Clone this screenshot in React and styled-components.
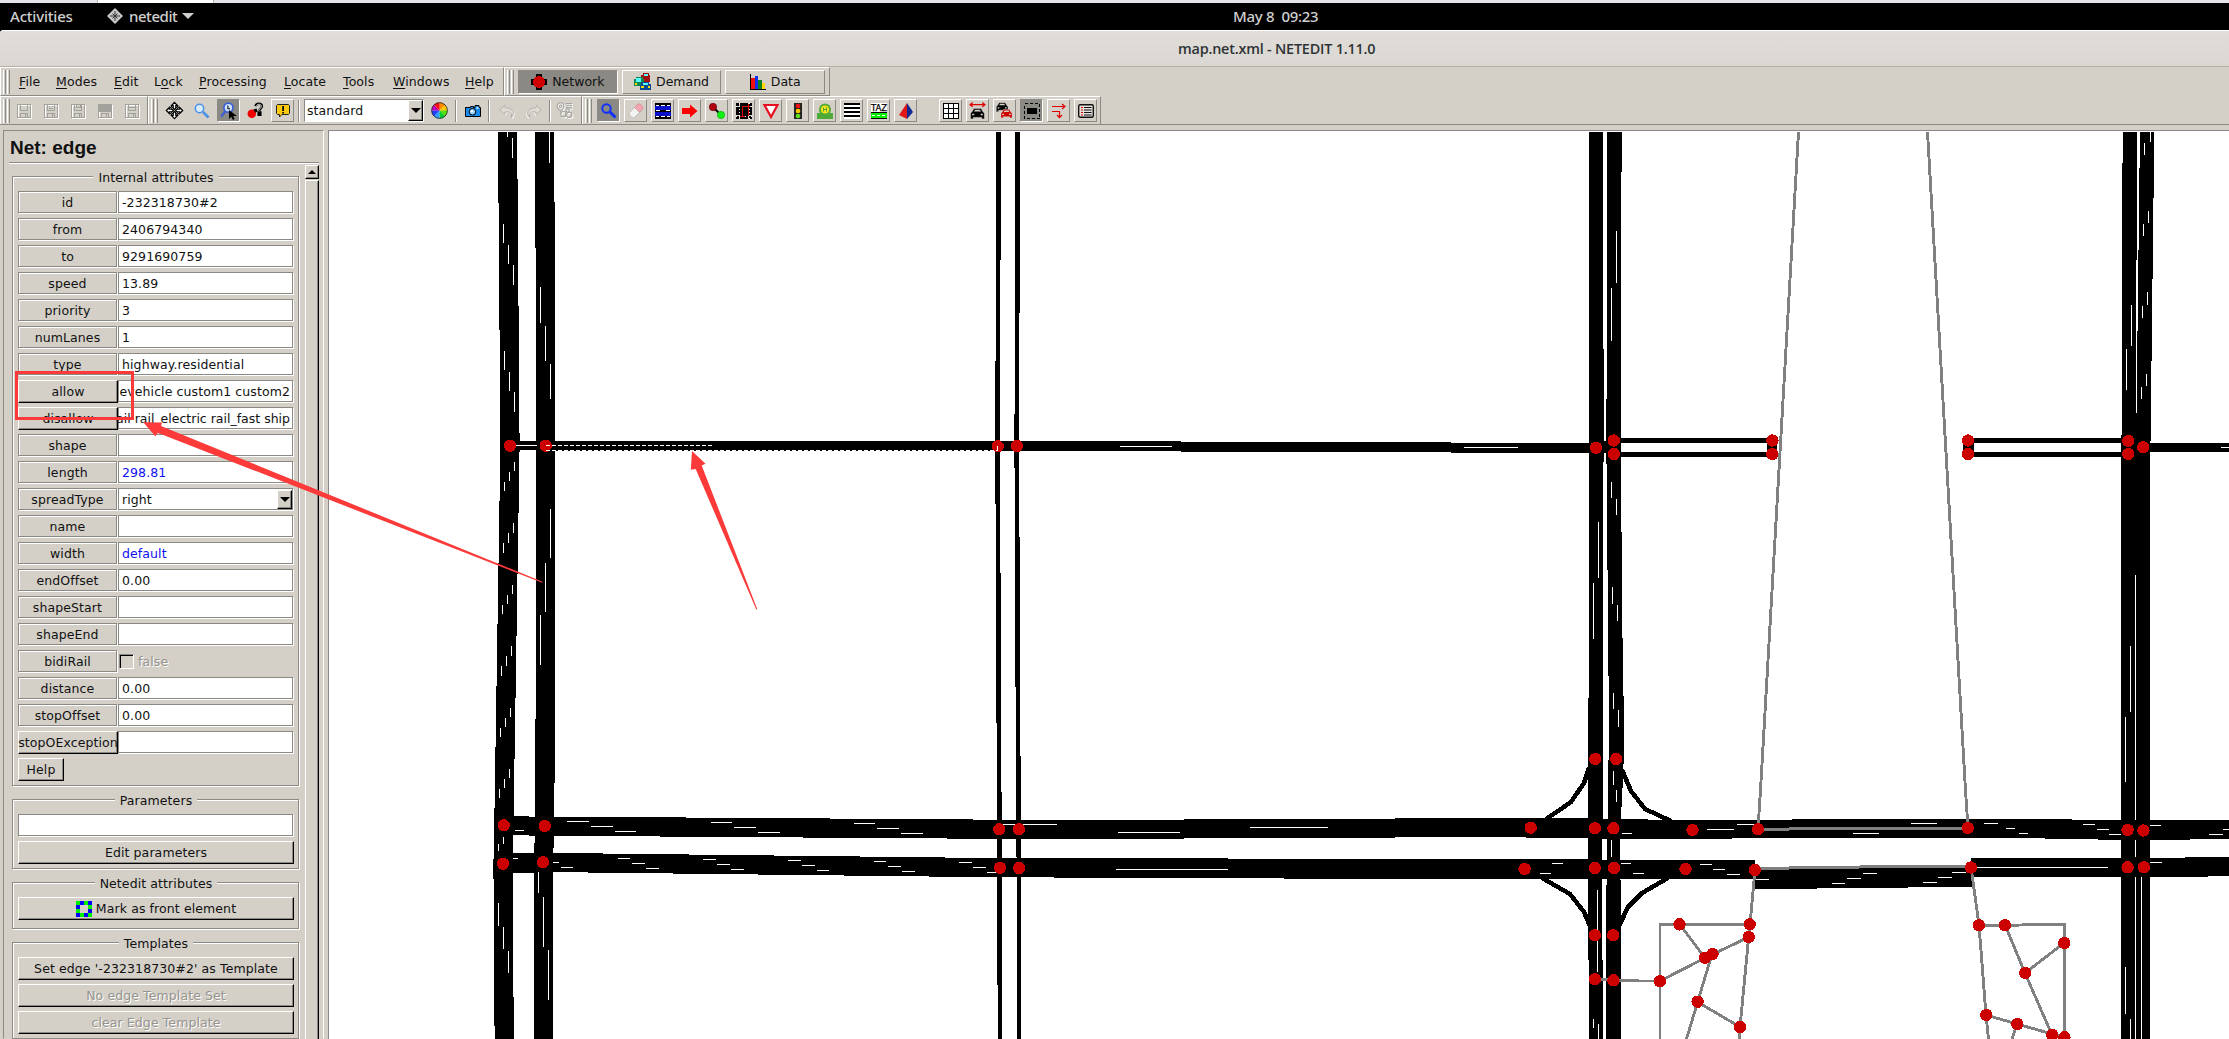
import React from 'react';
import styled, { createGlobalStyle, css } from 'styled-components';

const BASE = '#d4d0c8';
const SHADOW = '#8a8983';

const Global = createGlobalStyle`
  html, body { margin: 0; padding: 0; overflow: hidden; background: ${BASE}; }
  * { box-sizing: border-box; }
  svg { display: block; flex: none; }
`;

const groove = css`
  border: 1px solid ${SHADOW};
  box-shadow: 1px 1px 0 #fff, inset 1px 1px 0 #fff;
`;
const raised = css`
  border: 1px solid;
  border-color: #fff #000 #000 #fff;
  box-shadow: inset -1px -1px 0 ${SHADOW};
`;

const Screen = styled.div`
  position: relative;
  width: 2229px;
  height: 1039px;
  overflow: hidden;
  display: flex;
  flex-direction: column;
  background: ${BASE};
  color: #111;
  font: 12.5px/16px "DejaVu Sans", sans-serif;
  letter-spacing: 0.1px;
  white-space: nowrap;
`;
const BrowserEdge = styled.div`
  height: 3px;
  flex: none;
  background: #e4e5e8;
  padding-left: 97px;
  &::before { content: ''; display: block; width: 115px; height: 3px; background: #fff; border: solid #b5b5b8; border-width: 0 1px; }
`;
const TopBar = styled.header`
  height: 27px;
  flex: none;
  display: grid;
  grid-template-columns: 1233px 1fr;
  align-items: center;
  padding-bottom: 2px;
  background: #000;
  color: #cfcfcf;
  font: 500 15px/20px "Noto Sans", "Open Sans", sans-serif;
`;
const TopLeft = styled.div`
  display: flex;
  align-items: center;
  padding-left: 10px;
`;
const Activities = styled.span`
  width: 97px;
  letter-spacing: -0.2px;
`;
const AppName = styled.span`
  margin: 0 5px 0 6px;
  letter-spacing: -0.45px;
`;
const Clock = styled.span`
  letter-spacing: -0.3px;
  white-space: pre;
`;
const TitleBar = styled.div`
  height: 37px;
  flex: none;
  display: flex;
  align-items: center;
  padding: 1px 0 0 1178px;
  background: linear-gradient(#e1deda, #dad6d1);
  border-top: 1px solid #fff;
  border-bottom: 1px solid #b6afa6;
  border-top-left-radius: 3px;
  color: #2e3436;
  font: 600 14.4px/20px "Open Sans", "Noto Sans", sans-serif;
  letter-spacing: -0.2px;
`;
const TitleWrap = styled.div`
  background: #000;
  flex: none;
`;
const BarRow = styled.div`
  display: flex;
  flex: none;
  height: ${p => p.$h}px;
`;
const Bar = styled.div`
  display: flex;
  align-items: center;
  width: ${p => p.$w}px;
  padding-left: 2px;
  border: 1px solid;
  border-color: #fff ${SHADOW} ${SHADOW} #fff;
`;
const Grip = styled.i`
  width: 7px;
  height: 24px;
  flex: none;
  margin-right: ${p => p.$gap}px;
  border: solid ${SHADOW};
  border-width: 0 1px 0 0;
  background: linear-gradient(90deg, #fff 0 1px, ${BASE} 1px 2px, ${SHADOW} 2px 3px, ${BASE} 3px 4px, #fff 4px 5px, ${BASE} 5px);
`;
const MenuItem = styled.span`
  width: ${p => p.$w}px;
  &::first-letter { text-decoration: ${p => (p.$plain ? 'none' : 'underline')}; }
  text-underline-offset: 2px;
  u { text-underline-offset: 2px; }
`;
const ModeButton = styled.button`
  display: flex;
  align-items: center;
  justify-content: center;
  gap: 5px;
  width: 100px;
  height: 24px;
  margin-right: 4px;
  padding: 0;
  font: inherit;
  color: #111;
  border: 1px solid;
  background: ${p => (p.$on ? '#8b8983' : BASE)};
  border-color: ${p => (p.$on ? `${SHADOW} #fff #fff ${SHADOW}` : `#fff ${SHADOW} ${SHADOW} #fff`)};
`;
const Tool = styled.span`
  display: flex;
  align-items: center;
  justify-content: center;
  width: 23px;
  height: 23px;
  flex: none;
  margin-right: ${p => p.$after ?? 4}px;
  border: 1px solid transparent;
  ${p => p.$kind === 'up' && css`border-color: #fff ${SHADOW} ${SHADOW} #fff;`}
  ${p => p.$kind === 'on' && css`background: #8b8983; border-color: ${SHADOW} #fff #fff ${SHADOW};`}
`;
const Divider = styled.i`
  width: 2px;
  height: 22px;
  flex: none;
  margin-right: ${p => p.$after}px;
  border-left: 1px solid ${SHADOW};
  border-right: 1px solid #fff;
`;
const Combo = styled.div`
  display: flex;
  align-items: center;
  justify-content: space-between;
  width: 120px;
  height: 23px;
  flex: none;
  margin-right: 4px;
  padding: 0 0 0 2px;
  background: #fff;
  border: 1px solid;
  border-color: ${SHADOW} #fff #fff ${SHADOW};
`;
const DropArrow = styled.i`
  ${raised}
  width: 15px;
  height: 21px;
  display: flex;
  align-items: center;
  justify-content: center;
  background: ${BASE};
  &::after { content: ''; border: 5px solid transparent; border-top-color: #000; border-bottom: 0; }
`;
const Workspace = styled.main`
  display: flex;
  height: 915px;
  flex: none;
  padding: 5px 0 0 3px;
  border-top: 1px solid ${SHADOW};
  margin-top: -1px;
`;
const Side = styled.aside`
  width: 321px;
  flex: none;
  height: 909px;
  margin-right: 4px;
  padding: 1px 4px 0 5px;
  border: 1px solid;
  border-color: ${SHADOW} #fff transparent ${SHADOW};
`;
const SideTitle = styled.h1`
  margin: 0;
  height: 31px;
  padding: 4px 0 0 1px;
  font: bold 19px/24px "Liberation Sans", Arial, sans-serif;
  letter-spacing: 0;
  border-bottom: 1px solid ${SHADOW};
  box-shadow: 0 1px 0 #fff;
`;
const Scroller = styled.div`
  display: flex;
  justify-content: space-between;
  height: 880px;
  padding-top: 2px;
`;
const Groups = styled.div`
  width: 292px;
  padding: 11px 0 0 3px;
  display: flex;
  flex-direction: column;
  gap: 13px;
`;
const Group = styled.section`
  ${groove}
  width: 287px;
  padding: 14px 4px ${p => p.$bottom ?? 4}px 5px;
  display: flex;
  flex-direction: column;
  gap: 4px;
`;
const Legend = styled.h2`
  align-self: center;
  margin: -22px 0 2px;
  height: 16px;
  padding: 0 5px;
  background: ${BASE};
  font: inherit;
  line-height: 18px;
`;
const Row = styled.div`
  display: flex;
  height: 23px;
`;
const Label = styled.div`
  width: 99px;
  height: 22px;
  margin-right: 1px;
  padding-top: 2px;
  display: flex;
  align-items: center;
  justify-content: center;
  ${groove}
`;
const PushButton = styled.button`
  ${raised}
  display: flex;
  align-items: center;
  justify-content: center;
  gap: 4px;
  width: ${p => p.$w ?? 276}px;
  height: 23px;
  flex: none;
  padding: 1px 0 0;
  background: ${BASE};
  font: inherit;
  letter-spacing: inherit;
  color: ${p => (p.$off ? '#95938d' : '#111')};
  text-shadow: ${p => (p.$off ? '1px 1px 0 #fff' : 'none')};
`;
const Field = styled.div`
  width: ${p => p.$w ?? 175}px;
  height: 22px;
  flex: none;
  display: flex;
  align-items: center;
  justify-content: ${p => (p.$end ? 'flex-end' : 'flex-start')};
  padding: ${p => (p.$end ? '2px 2px 0 0' : '2px 3px 0')};
  letter-spacing: ${p => (p.$tight ? '0' : 'inherit')};
  background: #fff;
  color: ${p => (p.$blue ? '#1010f0' : '#111')};
  border: 1px solid ${SHADOW};
  box-shadow: 1px 1px 0 #fff;
`;
const SelectField = styled(Field)`
  justify-content: space-between;
  padding: 0 0 0 3px;
  & > span { padding-top: 2px; }
  & > i { height: 19px; }
`;
const Check = styled.div`
  display: flex;
  align-items: center;
  gap: 4px;
  padding-left: 1px;
  color: #95938d;
  text-shadow: 1px 1px 0 #fff;
  &::before { content: ''; width: 13px; height: 13px; border: 1px solid; border-color: ${SHADOW} #fff #fff ${SHADOW}; box-shadow: inset 1px 1px 0 #000; }
`;
const ScrollBar = styled.div`
  width: 14px;
  display: flex;
  flex-direction: column;
`;
const ScrollUp = styled.div`
  ${raised}
  height: 14px;
  display: flex;
  align-items: center;
  justify-content: center;
  &::after { content: ''; border: 4px solid transparent; border-bottom-color: #000; border-top: 0; }
`;
const Thumb = styled.div`
  ${raised}
  flex: 1;
  margin-top: 1px;
  border-bottom: 0;
`;
const Canvas = styled.div`
  flex: 1;
  height: 909px;
  border-left: 1px solid ${SHADOW};
  border-top: 1px solid ${SHADOW};
  background: #fff;
  overflow: hidden;
`;
const Annotations = styled.svg`
  position: absolute;
  left: 0;
  top: 0;
  pointer-events: none;
`;

/* ---------- icons ---------- */
const Ico = ({ children, s = 16, ...r }) => (
  <svg width={s} height={s} viewBox="0 0 16 16" fill="none" overflow="visible" {...r}>{children}</svg>
);
const crisp = { shapeRendering: 'crispEdges' };

const Floppy = ({ v }) => (
  <Ico {...crisp}>
    <g transform="translate(1 1)" stroke="#fff"><path d="M1.5 1.5h13v13h-13z" /></g>
    <path d="M1.5 1.5h13v13h-13z" stroke="#a3a19b" />
    {v === 3 ? <path d="M2 2h12v7H2z" fill="#a3a19b" /> : <path d="M4.500 2v5.500h7V2" stroke="#a3a19b" />}
    <path d="M4.500 14v-3.500h7V14M9.500 11v3" stroke="#a3a19b" />
    {v === 1 && <path d="M6 3h1v1H6zM9 3h1v1H9zM6 5h4v1H6z" fill="#a3a19b" />}
    {v === 2 && <path d="M6 1h4v3H6z" fill="#d4d0c8" stroke="#a3a19b" />}
    {v === 4 && <path d="M4 4.500h8M4 10.500h8" stroke="#a3a19b" />}
  </Ico>
);
const Recenter = () => (
  <Ico s={17}>
    {[0, 90, 180, 270].map(a => (
      <path key={a} transform={`rotate(${a} 8 8)`} d="M8 .3l2.800 2.800H9.200v2.700L8 7 6.800 5.800V3.100H5.200z" fill="#fff" stroke="#000" strokeWidth="1.100" />
    ))}
    {[45, 135, 225, 315].map(a => (
      <path key={a} transform={`rotate(${a} 8 8)`} d="M7.300 3.400h1.400v2.800H7.300z" fill="#fff" stroke="#000" strokeWidth=".9" />
    ))}
  </Ico>
);
const Lens = ({ c = '#3b6fe0', fill = '#d9ecfb', w = 1.5 }) => (
  <Ico><path d="M9 9l5.500 5.500" stroke={c} strokeWidth={w + 1} /><circle cx="5.500" cy="5.500" r="4.200" fill={fill} stroke={c} strokeWidth={w} /></Ico>
);
const LensCursor = () => (
  <Ico s={18}>
    <circle cx="7.500" cy="5" r="4" fill="#cfe4fa" stroke="#3c5fd8" strokeWidth="1.500" />
    <path d="M4.500 8.500L1 13" stroke="#3c5fd8" strokeWidth="2" /><path d="M7 3v3h2" stroke="#111" />
    <path d="M8 7v8l2-2 1.500 3 1.500-.8L11.700 12.500H15z" fill="#000" />
  </Ico>
);
const BugHelp = () => (
  <Ico s={17}>
    <path d="M8 4c.5-3 6-3.500 6 0 0 2-2.500 2-2.500 4.500M11 10h1.500v2H11z" stroke="#000" strokeWidth="2.400" />
    <path d="M8.500 4.200c.5-2.500 5-3 5 0 0 2-2.500 2-2.500 4" stroke="#fff" strokeWidth=".8" />
    <circle cx="4.500" cy="11" r="4" fill="#f00000" /><path d="M6 7l3-1 1 3-2 1z" fill="#000" />
  </Ico>
);
const Comment = () => (
  <Ico><path d="M2.500 1.500h11l1 1v8l-1 1H7L4.500 14v-2.500h-2l-1-1v-8z" fill="#ffc90e" stroke="#222" /><path d="M7.200 3h1.800v5H7.200zM7.200 9h1.800v1.500H7.200z" fill="#111" /></Ico>
);
const Wheel = () => {
  const cols = ['#ff8a00', '#ffc800', '#58e000', '#00d030', '#2aa0ff', '#2040ff', '#c000c0', '#ff1010'];
  return (
    <Ico s={17}>
      {cols.map((c, i) => {
        const a = (i * Math.PI) / 4 - Math.PI / 2, b = a + Math.PI / 4;
        return <path key={c} fill={c} d={`M8 8L${8 + 7.5 * Math.cos(a)} ${8 + 7.5 * Math.sin(a)}A7.500 7.500 0 0 1 ${8 + 7.5 * Math.cos(b)} ${8 + 7.5 * Math.sin(b)}z`} />;
      })}
      <circle cx="8" cy="8" r="7.400" stroke="#222" strokeWidth=".8" />
    </Ico>
  );
};
const Camera = () => (
  <Ico><path d="M.5 4.500h5v-1h3v1H10v-2h4v2h1.500v9H.5z" fill="#1a8cf0" stroke="#000" /><circle cx="7.500" cy="8.800" r="3.300" fill="#8fd0ff" stroke="#000" /><circle cx="7" cy="8.300" r="1.200" fill="#fff" /><path d="M11.500 4h2v2h-2z" fill="#bfe4ff" /></Ico>
);
const Undo = ({ flip }) => (
  <Ico><g transform={flip ? 'translate(16 0) scale(-1 1)' : undefined}>
    <path d="M6 2L.8 6.800 6 11.500V9c4-.5 6.500.5 6.500 3v2.500c3-3 3.500-9-6.500-10z" fill="#dedbd4" stroke="#fff" transform="translate(.8 .8)" />
    <path d="M6 2L.8 6.800 6 11.500V9c4-.5 6.500.5 6.500 3v2.500c3-3 3.500-9-6.500-10z" fill="#dedbd4" stroke="#b2b0aa" />
  </g></Ico>
);
const GrayPins = () => (
  <Ico s={17}>
    {['#fff', '#a5a39d'].map((c, i) => (
      <g key={c} stroke={c} transform={i ? undefined : 'translate(1 1)'}>
        <path d="M1 4a3.200 3.200 0 0 1 6.500 0c0 2-2 3-3.200 5C3 7 1 6 1 4z" /><circle cx="4.300" cy="4" r="1.200" />
        <path d="M9 1.500h6M10 3.500h5M9 5.500h6" /><circle cx="7" cy="11.500" r="2.500" /><circle cx="12.500" cy="12" r="2.500" /><circle cx="11" cy="8" r="1.500" />
      </g>))}
  </Ico>
);
const Eraser = () => (
  <Ico><path d="M9.500 1.500q1.500-1.500 3 0l2 2q1 1.300 0 2.500L11.500 9.500l-5-5z" fill="#f4a6b0" stroke="#d78" strokeWidth=".6" /><path d="M6.500 4.500l5 5-5 5q-1.300 1-2.500 0l-2.500-2.500q-1-1.300 0-2.500z" fill="#f2f2f0" stroke="#aaa" strokeWidth=".6" /><path d="M11.500 9.500l3-3.500v1.500L6.500 15l-2-.5q1 .5 2 0z" fill="#bab7b2" /></Ico>
);
const RoadLanes = () => (
  <Ico {...crisp}><path d="M0 0h16v16H0z" fill="#0a10c8" /><path d="M0 0h16v3H0zM0 13h16v3H0zM0 7h16v2H0z" fill="#000" /><path d="M1 2.500h3m2 0h4m2 0h3M1 7.500h4m6 0h4M1 13.500h3m2 0h4m2 0h3" stroke="#fff" /></Ico>
);
const RedArrow = () => (<Ico><path d="M0 5h8V1.500L15.500 8 8 14.500V11H0z" fill="#f00" /></Ico>);
const Connect = () => (
  <Ico><path d="M4 4l8 8" stroke="#000" strokeWidth="2" /><circle cx="4" cy="4" r="3.700" fill="#b00010" stroke="#500" strokeWidth=".6" /><circle cx="12" cy="12" r="3.700" fill="#10f010" stroke="#0a0" strokeWidth=".6" /></Ico>
);
const Junction = () => (
  <Ico {...crisp}><path d="M4 0h8v4h4v8h-4v4H4v-4H0V4h4z" fill="#000" /><path d="M0 0h3v3H0zM13 0h3v3h-3zM0 13h3v3H0zM13 13h3v3h-3z" fill="#000" /><path d="M3 0v16M13 0v16M0 3h16M0 13h16" stroke="#fff" strokeDasharray="1 2" /><path d="M6.500 14V3.500H14M12 1v5M12 3v10M4 13h5" stroke="#e00000" /></Ico>
);
const Yield = () => (<Ico><path d="M1.500 2h13L8 14z" fill="#fff" stroke="#e81020" strokeWidth="2.200" /></Ico>);
const Light = () => (
  <Ico><path d="M4 0h8v16H4z" fill="#222" /><circle cx="8" cy="3" r="2.300" fill="#f01010" /><circle cx="8" cy="8" r="2.300" fill="#ffc800" /><circle cx="8" cy="13" r="2.300" fill="#60e020" /></Ico>
);
const Stop = () => (
  <Ico><path d="M0 10h16v6H0z" fill="#4faa38" /><circle cx="8" cy="6.500" r="6" fill="#4faa38" /><circle cx="8" cy="6.500" r="4" fill="#f4e21c" /><path d="M6.500 4.500v4M9.500 4.500v4M6.500 6.500h3" stroke="#4faa38" /></Ico>
);
const Crossing = () => (<Ico {...crisp}><path d="M0 0h16v16H0z" fill="#fff" /><path d="M0 1h16M0 5h16M0 9h16M0 13h16" stroke="#000" strokeWidth="2" /></Ico>);
const TazText = styled.text`
  font: 8.5px "DejaVu Sans", sans-serif;
  letter-spacing: 0;
`;
const Taz = () => (
  <Ico {...crisp}><path d="M0 0h16v10H0z" fill="#fff" /><TazText x="0" y="7.500" fill="#000" stroke="#000" strokeWidth=".25">TAZ</TazText><path d="M0 9h16v7H0z" fill="#00f000" /><path d="M0 9.500h16M0 15.500h16" stroke="#000" /><path d="M1 12.500h14" stroke="#fff" strokeDasharray="3 2" /></Ico>
);
const Pyramid = () => (<Ico><path d="M9 0L1 12l8 4z" fill="#e01818" /><path d="M9 0l6 9-6 7z" fill="#102a90" /></Ico>);
const GridIcon = () => (<Ico {...crisp}><path d="M.5 .5h15v15H.5z" fill="#fff" stroke="#000" /><path d="M5.500 0v16M10.500 0v16M0 5.500h16M0 10.500h16" stroke="#000" /></Ico>);
const CarShape = ({ c = '#000', t, fill = '#d4d0c8' }) => (
  <g transform={t}><path d="M3 7l1.500-3h7L13 7l1.500 1.500V14h-2.500v-1.500H4V14H1.500V8.500z" fill={c} stroke={fill} strokeWidth=".5" /><path d="M4.800 7l.8-1.800h4.800l.8 1.800zM3 9h2v1.500H3zM11 9h2v1.500h-2z" fill={fill} /></g>
);
const CarSpan = () => (<Ico s={17}><path d="M1 2.500h14M3.500 .5l-2.500 2 2.500 2M12.500 .5l2.500 2-2.500 2" stroke="#e00000" strokeWidth="1.200" /><CarShape t="translate(0 2)" /></Ico>);
const CarPair = () => (<Ico s={17}><CarShape t="translate(-1 -2.800) scale(.85)" /><CarShape c="#d00000" t="translate(3.500 3.800) scale(.8)" /></Ico>);
const SelectBox = () => (<Ico {...crisp}><path d="M.5 .5h15v15H.5z" stroke="#000" strokeDasharray="3 2" /><path d="M3 5h10v6H3z" fill="#000" /></Ico>);
const Turns = () => (<Ico><path d="M1 3.500h12M11 1l3 2.500L11 6M1 8.500h7.500v5.500M6 12l2.500 2.700L11 12" stroke="#e00000" strokeWidth="1.200" /></Ico>);
const ListIcon = () => (<Ico><rect x=".7" y="1.700" width="14.600" height="12.600" rx="1.500" stroke="#111" strokeWidth="1.400" fill="#e5e2dc" /><path d="M6 4.500h7.500M6 7h7.500M6 9.500h7.500M6 12h7.500" stroke="#111" /><path d="M3 4.500h2M3 7h2M3 9.500h2M3 12h2" stroke="#d00" /></Ico>);
const NetworkIcon = () => (<Ico {...crisp}><path d="M5 0h6v3H5zM5 13h6v3H5zM0 5h3v6H0zM13 5h3v6h-3z" fill="#000" /><circle cx="8" cy="8" r="6" fill="#d00000" /></Ico>);
const DemandIcon = () => (
  <Ico s={17} {...crisp}>
    <path d="M8 0h6v2h1v6H7V2h1z" fill="#a01010" /><path d="M9 1h4v2H9z" fill="#5ff" />
    <path d="M2 4h6v2h1v6H0V6h2z" fill="#0a8a50" /><path d="M2 5h5v3H2z" fill="#5ff" /><path d="M1 9h2v2H1z" fill="#fd0" />
    <path d="M7 8h7v2h2v6H6v-5h1z" fill="#0a4a90" /><path d="M8 9h5v2H8z" fill="#5ff" /><path d="M7 12h2v2H7zM13 12h2v2h-2z" fill="#fd0" />
  </Ico>
);
const DataIcon = () => (<Ico {...crisp}><path d="M.5 0v15.500H16" stroke="#000" /><path d="M1 4h4v11H1z" fill="#f01010" /><path d="M5 2h3v13H5z" fill="#1030f0" /><path d="M8 6h4v9H8z" fill="#108020" /><path d="M12 9h3v6h-3z" fill="#ffd800" /></Ico>);
const FrontIcon = () => (
  <Ico {...crisp}>
    <path d="M2 2h12v12H2z" stroke="#0000ff" strokeWidth="4" />
    <path d="M0 0h4v4H0zM8 0h4v4H8zM12 4h4v4h-4zM0 8h4v4H0zM4 12h4v4H4zM12 12h4v4h-4z" fill="#00f000" />
  </Ico>
);
const NeteditLogo = () => (
  <Ico><path d="M8 0l8 8-8 8-8-8z" fill="#c8c8c8" /><path d="M8 3v10M3 8h10M5.500 5.500l5 5M10.500 5.500l-5 5" stroke="#333" strokeWidth="1" /></Ico>
);
const TopCaret = () => (<svg width="12" height="6"><path d="M0 0h12L6 6z" fill="#cfcfcf" /></svg>);

/* ---------- network data ---------- */
const roads = [
  '498,132 498,203 499,203 499,330 500,330 500,501 499,501 499,563 498,563 498,624 497,624 497,686 496,686 496,747 495,747 495,808 494,808 494,859 493,859 493,879 494,879 494,1026 495,1026 495,1039 514,1039 514,997 513,997 513,835 514,835 514,759 515,759 515,698 516,698 516,636 517,636 517,574 518,574 518,513 519,513 519,452 520,452 520,433 519,433 519,306 518,306 518,179 517,179 517,132',
  '535,132 535,248 536,248 536,719 535,719 535,843 534,843 534,1039 553,1039 553,848 554,848 554,783 555,783 555,202 554,202 554,132',
  '996,132 996,361 995,361 995,504 996,504 996,723 997,723 997,985 998,985 998,1039 1002,1039 1002,792 1001,792 1001,573 1000,573 1000,260 1001,260 1001,132',
  '1015,132 1015,414 1014,414 1014,468 1015,468 1015,687 1016,687 1016,857 1017,857 1017,1039 1021,1039 1021,756 1020,756 1020,537 1019,537 1019,313 1020,313 1020,132',
  '1589,132 1589,698 1588,698 1588,960 1589,960 1589,1039 1603,1039 1603,960 1602,960 1602,820 1603,820 1603,462 1604,462 1604,349 1603,349 1603,132',
  '1607,132 1607,399 1606,399 1606,464 1607,464 1607,570 1608,570 1608,676 1609,676 1609,760 1608,760 1608,820 1607,820 1607,885 1606,885 1606,1039 1621,1039 1621,880 1620,880 1620,830 1622,800 1624,753 1623,638 1622,638 1622,532 1621,532 1621,172 1622,172 1622,132',
  '2123,132 2123,163 2122,163 2122,435 2121,435 2121,1039 2150,1039 2150,441 2151,441 2151,361 2152,361 2152,279 2153,279 2153,198 2154,198 2154,132 2140,132 2140,168 2139,168 2139,250 2138,250 2138,331 2137,331 2137,413 2136,413 2136,260 2137,260 2137,132',
  '515,441 1060,441 1300,442 1596,443 1596,453 1300,452 1060,451 554,451 554,450 515,450',
  '1596,443 1607,441 1607,453 1596,453',
  '1607,438 1777,438 1777,457 1607,457 1607,451.5 1767,452.500 1767,443 1607,443',
  '1963,438 2122,438.500 2122,443.500 1974,443 1974,452 2122,452 2122,457 1963,457',
  '2143,443 2229,443 2229,452 2143,452',
  '503,816 554,817 686,817 686,818 830,818 830,819 973,819 973,820 1080,820 1290,819 1500,818 1581,818 1670,820 1792,820 1792,819 2063,819 2080,820 2229,820 2229,839 2150,840 2045,839 2045,838 1825,838 1643,839 1552,838 1500,837 1080,839 947,839 947,838 803,838 803,837 660,837 660,836 554,836 503,835',
  '503,854 522,853 603,853 603,854 689,854 689,855 774,855 774,856 860,856 860,857 945,857 945,858 1500,859 1684,860 1755,860 1755,879 1500,879 1054,878 1054,877 929,877 929,876 844,876 844,875 758,875 758,874 673,874 673,873 588,873 588,872 503,873',
  '1755,869 1972,867 1972,887 1908,887 1908,888 1817,888 1817,889 1755,889',
  '1971,858 2185,858 2185,857 2229,857 2229,876 2208,876 2208,877 1971,877',
];
const ramps = [
  '1546,819 1558,811 1571,802 1584,783 1589,768',
  '1622,770 1631,791 1645,809 1671,821',
  '1542,878 1556,886 1570,894 1584,912 1590,926',
  '1668,878 1642,893 1628,907 1619,926',
];
const trails = [
  '1798.5,132 1760.500,790 1758,829', '1927.500,132 1965.500,790 1968,828',
  '1755,870 1750,924 1748.700,937 1740,1027 1739.500,1039',
  '1750,924.500 1660,924.500 1660,1039', '1679.500,924 1705,958',
  '1749,937 1705,958 1660,981 1640,981 1613,980 1595,979',
  '1712,954 1697.600,1002 1686.500,1039', '1697.600,1002 1740,1027',
  '1971,867 1979,925 1986,1015 1988.500,1039',
  '1979,925.500 2005,925.500 2036,924.500 2064.500,924.500 2064.500,1039',
  '2005,925 2025,973 2052,1035', '2064,943 2025,973', '1986,1015 2017,1024 2052,1034 2064,1037', '2017,1024 2012,1039',
];
const footbridges = ['1758,829.500 1820,828.500 1967,828.500', '1755,868.500 1860,867 1971,866.500'];
/* lane markings: [x, y1, y2] and [x1, x2, y] */
const vMarks = [
  [512, 138, 158], [507, 132, 137], [503, 224, 243], [508, 245, 264], [513, 265, 285], [504, 351, 370], [509, 372, 391], [514, 392, 412],
  [514, 462, 471], [509, 472, 481], [504, 482, 491], [513, 523, 533], [508, 533, 543], [503, 543, 553], [512, 585, 594], [507, 595, 604], [502, 605, 614],
  [511, 646, 656], [506, 656, 666], [501, 666, 676], [510, 708, 717], [505, 718, 727], [500, 728, 737], [509, 769, 778], [504, 779, 788], [499, 789, 798],
  [503, 837, 844], [498, 844, 851], [498, 903, 926], [503, 927, 949], [508, 951, 973],
  [549, 132, 163], [540, 287, 323], [545, 326, 361], [550, 364, 399], [550, 509, 558], [545, 563, 612], [540, 615, 665], [538, 872, 893], [543, 897, 947], [548, 950, 1000],
  [1598, 522, 578], [1593, 583, 639], [1616, 231, 283], [1611, 288, 341], [1611, 482, 498], [1616, 499, 515], [1612, 587, 604], [1617, 605, 621], [1613, 693, 709], [1618, 710, 727],
  [1613, 771, 785], [1616, 790, 802], [1611, 840, 857], [1597, 890, 972], [1593, 1019, 1028], [1598, 1024, 1039],
  [2131, 305, 346], [2126, 349, 390], [2150, 132, 142], [2144, 143, 155], [2148, 211, 223], [2143, 224, 236], [2147, 292, 305], [2142, 306, 318], [2146, 374, 386], [2141, 387, 399],
  [2135, 575, 820], [2135, 840, 857], [2135, 877, 1039], [2130, 646, 712], [2125, 717, 782], [2125, 967, 1014], [2130, 1019, 1039], [2141, 877, 1039],
];
const hMarks = [
  [516, 537, 445], [1120, 1172, 446], [1464, 1518, 447], [2221, 2229, 447],
  [515, 524, 830], [567, 589, 821], [591, 613, 826], [615, 636, 831], [711, 732, 822], [734, 756, 827], [758, 780, 832], [854, 875, 823], [877, 899, 828], [901, 923, 833], [1003, 1057, 824],
  [1118, 1180, 832], [1250, 1328, 827],
  [1622, 1632, 833], [1707, 1734, 829], [1737, 1756, 824], [1911, 1937, 823], [1853, 1879, 833], [1984, 1998, 823], [2006, 2015, 828], [2019, 2028, 833], [2083, 2095, 824], [2097, 2109, 829], [2109, 2121, 834], [2150, 2161, 825], [2209, 2223, 834], [2223, 2229, 829],
  [513, 518, 858], [553, 559, 862], [561, 573, 867],
  [618, 630, 858], [632, 645, 863], [646, 659, 868], [703, 716, 859], [717, 730, 864], [731, 744, 869], [788, 801, 860], [802, 815, 865], [817, 829, 870], [874, 886, 861], [888, 901, 866], [902, 915, 871], [959, 972, 862], [973, 986, 867], [987, 996, 872],
  [1116, 1228, 869], [1540, 1551, 873], [1552, 1563, 863], [1621, 1631, 863], [1633, 1644, 873], [1700, 1712, 864], [1713, 1725, 869], [1727, 1740, 874],
  [1756, 1769, 879], [1832, 1845, 883], [1847, 1861, 878], [1863, 1877, 873], [1923, 1937, 882], [1938, 1952, 877], [1952, 1966, 872], [1977, 2108, 867], [2150, 2162, 862],
];
const junctions = [
  [510, 445.7], [545.7, 445.7], [997.7, 446.3], [1016.8, 446], [1596, 447.7], [1613.8, 440.5], [1613.8, 454], [1772.4, 440.5], [1772.4, 454], [1968, 440.5], [1968, 454], [2128.3, 441], [2128.3, 454], [2143.2, 447.3],
  [503.7, 825.3], [544.7, 826], [999.3, 829.3], [1018.8, 829.3], [503, 863.7], [543, 862.3], [1000, 867.7], [1019.2, 868],
  [1595.3, 759], [1616.2, 759], [1530.7, 827.7], [1594.8, 828.3], [1613.4, 828.3], [1692.5, 830], [1758, 829.3], [1967.7, 828], [2127.6, 830], [2143.4, 830.5],
  [1524.6, 869], [1594.8, 868], [1613.9, 868], [1685.5, 869], [1754.8, 870], [1970.9, 867.5], [2127.6, 867.3], [2143.9, 867.3],
  [1594.8, 935.3], [1613.2, 935.3],
  [1679.5, 924.3], [1749.7, 924.3], [1748.7, 937], [1705, 957.7], [1712.5, 954], [1659.9, 981.3], [1594.8, 979.3], [1613.4, 980.3], [1697.6, 1001.7], [1739.9, 1027],
  [1978.8, 925.3], [2004.9, 925.3], [2064.4, 943], [2025.3, 973], [1986.3, 1015], [2017.4, 1024], [2052.3, 1034.7], [2064.4, 1037.3],
];

const NetworkView = () => (
  <svg width="1900" height="908" viewBox="329 131 1900 908" shapeRendering="crispEdges">
    <path d="M329 131h1900v1H329z" fill="#fff" />
    <g fill="#000">{roads.map(p => <polygon key={p} points={p} />)}</g>
    <g fill="none" stroke="#000" strokeWidth="4.500">{ramps.map(p => <polyline key={p} points={p} />)}</g>
    <g fill="none" stroke="#808080" strokeWidth="2.900">{trails.map(p => <polyline key={p} points={p} />)}</g>
    <g fill="none" stroke="#808080" strokeWidth="3">{footbridges.map(p => <polyline key={p} points={p} />)}</g>
    <g fill="#fff">
      {vMarks.map(([x, a, b]) => <rect key={`${x}-${a}`} x={x} y={a} width="1" height={b - a} />)}
      {hMarks.map(([a, b, y]) => <rect key={`${a}-${y}`} x={a} y={y} width={b - a} height="1" />)}
    </g>
    <g fill="#cc0000">{junctions.map(([x, y]) => <circle key={`${x}-${y}`} cx={x} cy={y} r="6.200" />)}</g>
    <path d="M546 445.500H714M546 450.500H998M997.500 446v5" stroke="#fff" strokeDasharray="4 2" />
  </svg>
);

/* ---------- content ---------- */
const menus = [['File', 37], ['Modes', 58], ['Edit', 40], ['Lock', 45], ['Processing', 85], ['Locate', 59], ['Tools', 50], ['Windows', 72], ['Help', 34]];
const attributes = [
  ['id', '-232318730#2'], ['from', '2406794340'], ['to', '9291690759'], ['speed', '13.89'], ['priority', '3'], ['numLanes', '1'],
  ['type', 'highway.residential'], ['allow', 'evehicle custom1 custom2', 'long'], ['disallow', 'ail rail_electric rail_fast ship', 'long'],
  ['shape', ''], ['length', '298.81', 'blue'], ['spreadType', 'right', 'select'], ['name', ''], ['width', 'default', 'blue'], ['endOffset', '0.00'],
  ['shapeStart', ''], ['shapeEnd', ''], ['bidiRail', 'false', 'check'], ['distance', '0.00'], ['stopOffset', '0.00'], ['stopOException', '', 'button'],
];
const editTools = [
  [<Lens c="#1030ff" fill="none" w={2} />, 'on'], [<Eraser />], [<RoadLanes />], [<RedArrow />], [<Connect />], [<Junction />], [<Yield />], [<Light />],
  [<Stop />], [<Crossing />], [<Taz />], [<Pyramid />, 'up', 22], [<GridIcon />], [<CarSpan />], [<CarPair />], [<SelectBox />, 'on'], [<Turns />], [<ListIcon />],
];

const AttributeRow = ({ name, value, kind }) => (
  <Row>
    {kind === 'long' || kind === 'button' ? <PushButton $w={100}>{name}</PushButton> : <Label>{name}</Label>}
    {kind === 'check' && <Check>{value}</Check>}
    {kind === 'select' && <SelectField><span>{value}</span><DropArrow /></SelectField>}
    {kind !== 'check' && kind !== 'select' && (
      <Field $end={kind === 'long'} $tight={value.length > 30} $blue={kind === 'blue'}>{value}</Field>
    )}
  </Row>
);

export default function App() {
  return (
    <Screen>
      <Global />
      <BrowserEdge />
      <TopBar>
        <TopLeft><Activities>Activities</Activities><NeteditLogo /><AppName>netedit</AppName><TopCaret /></TopLeft>
        <Clock>May 8  09:23</Clock>
      </TopBar>
      <TitleWrap><TitleBar>map.net.xml - NETEDIT 1.11.0</TitleBar></TitleWrap>
      <BarRow $h={29}>
        <Bar $w={504}>
          <Grip $gap={9} />
          {menus.map(([m, w]) => (m === 'Lock'
            ? <MenuItem key={m} $w={w} $plain>L<u>o</u>ck</MenuItem>
            : <MenuItem key={m} $w={w}>{m}</MenuItem>))}
        </Bar>
        <Bar $w={326}>
          <Grip $gap={4} />
          <ModeButton $on><NetworkIcon />Network</ModeButton>
          <ModeButton><DemandIcon />Demand</ModeButton>
          <ModeButton><DataIcon />Data</ModeButton>
        </Bar>
      </BarRow>
      <BarRow $h={29}>
        <Bar $w={148}>
          <Grip $gap={2} />
          {[0, 1, 2, 3, 4].map(v => <Tool key={v}><Floppy v={v} /></Tool>)}
        </Bar>
        <Bar $w={434}>
          <Grip $gap={5} />
          <Tool><Recenter /></Tool>
          <Tool><Lens c="#4a90e8" /></Tool>
          <Tool $kind="on"><LensCursor /></Tool>
          <Tool><BugHelp /></Tool>
          <Tool $kind="up"><Comment /></Tool>
          <Divider $after={4} />
          <Combo><span>standard</span><DropArrow /></Combo>
          <Tool><Wheel /></Tool>
          <Divider $after={4} />
          <Tool><Camera /></Tool>
          <Divider $after={5} />
          <Tool><Undo /></Tool>
          <Tool><Undo flip /></Tool>
          <Divider $after={2} />
          <Tool><GrayPins /></Tool>
        </Bar>
        <Bar $w={519}>
          <Grip $gap={5} />
          {editTools.map(([icon, kind = 'up', after], i) => <Tool key={i} $kind={kind} $after={after}>{icon}</Tool>)}
        </Bar>
      </BarRow>
      <Workspace>
        <Side>
          <SideTitle>Net: edge</SideTitle>
          <Scroller>
            <Groups>
              <Group>
                <Legend>Internal attributes</Legend>
                {attributes.map(([n, v, k]) => <AttributeRow key={n} name={n} value={v} kind={k} />)}
                <PushButton $w={46}>Help</PushButton>
              </Group>
              <Group>
                <Legend>Parameters</Legend>
                <Row><Field $w={275} /></Row>
                <PushButton>Edit parameters</PushButton>
              </Group>
              <Group $bottom={8}>
                <Legend>Netedit attributes</Legend>
                <PushButton><FrontIcon />Mark as front element</PushButton>
              </Group>
              <Group>
                <Legend>Templates</Legend>
                <PushButton>Set edge '-232318730#2' as Template</PushButton>
                <PushButton $off>No edge Template Set</PushButton>
                <PushButton $off>clear Edge Template</PushButton>
              </Group>
            </Groups>
            <ScrollBar><ScrollUp /><Thumb /></ScrollBar>
          </Scroller>
        </Side>
        <Canvas><NetworkView /></Canvas>
      </Workspace>
      <Annotations width="2229" height="1039">
        <rect x="16.500" y="372.500" width="116" height="46" fill="none" stroke="#fc3a3a" strokeWidth="3" />
        <path d="M143.300 422.300L162 422.500 161 426 542.500 581.700 542.200 582.800 157.500 432.700 155.500 436.500z" fill="#fc3a3a" />
        <path d="M692 451l13.500 12.700-3.800 1.800L757.300 609.200l-1 .3L695.700 469l-4.900.7z" fill="#fc3a3a" />
      </Annotations>
    </Screen>
  );
}
